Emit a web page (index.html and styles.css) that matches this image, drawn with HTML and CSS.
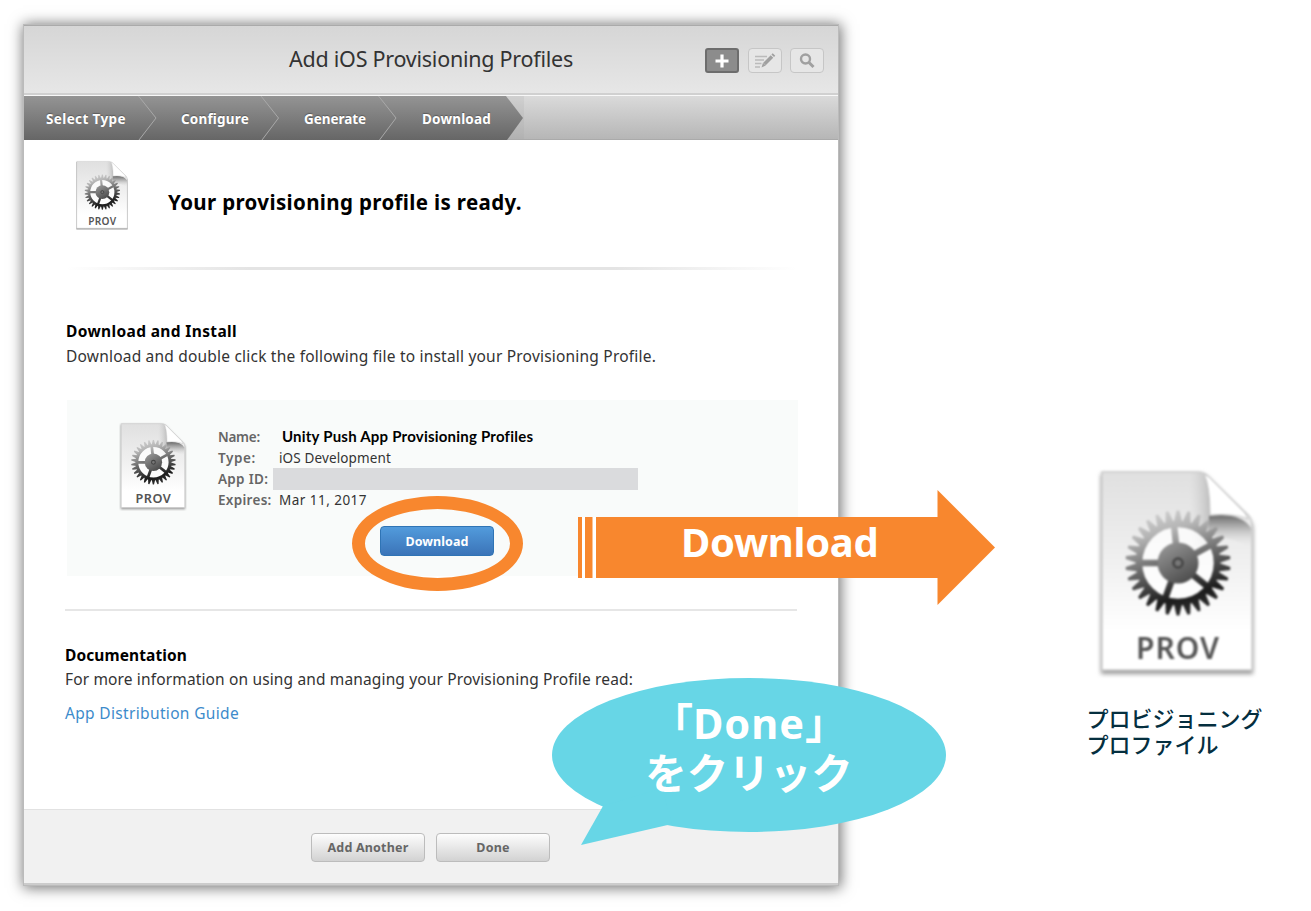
FILE: index.html
```html
<!DOCTYPE html>
<html lang="ja">
<head>
<meta charset="utf-8">
<title>Add iOS Provisioning Profiles</title>
<link rel="stylesheet" href="styles.css">
</head>
<body>
<svg class="defs" width="0" height="0" aria-hidden="true">
  <defs>
    <linearGradient id="paper" x1="0" y1="0" x2="0" y2="1"><stop offset="0" stop-color="#e0e0e0"/><stop offset=".45" stop-color="#f0f0f0"/><stop offset=".8" stop-color="#fff"/></linearGradient>
    <linearGradient id="metal" x1=".35" y1="0" x2=".65" y2="1"><stop offset="0" stop-color="#d0d0d0"/><stop offset=".2" stop-color="#b4b4b4"/><stop offset=".5" stop-color="#666"/><stop offset=".8" stop-color="#1c1c1c"/><stop offset="1" stop-color="#333"/></linearGradient>
    <linearGradient id="hub" x1=".2" y1="0" x2=".8" y2="1"><stop offset="0" stop-color="#979797"/><stop offset="1" stop-color="#484848"/></linearGradient>
    <linearGradient id="fold" x1="0" y1="1" x2="1" y2="0"><stop offset="0" stop-color="#fff"/><stop offset=".5" stop-color="#fff"/><stop offset="1" stop-color="#ccc"/></linearGradient>
    <linearGradient id="shade" x1="0" y1="0" x2="0" y2="1"><stop offset="0" stop-color="#6a6a6a"/><stop offset=".4" stop-color="#aaa" stop-opacity=".8"/><stop offset="1" stop-color="#eee" stop-opacity="0"/></linearGradient>
    <linearGradient id="shade2" x1="0" y1="0" x2="1" y2="0"><stop offset="0" stop-color="#ccc" stop-opacity="0"/><stop offset="1" stop-color="#aaa"/></linearGradient>
    <path id="tooth" d="M-4.4 -40L-1.4 -52.5H1.4L4.4 -40Z"/>
    <g id="teeth"><use href="#tooth"/><use href="#tooth" transform="rotate(12)"/><use href="#tooth" transform="rotate(24)"/><use href="#tooth" transform="rotate(36)"/><use href="#tooth" transform="rotate(48)"/></g>
    <mask id="gear" maskUnits="userSpaceOnUse" x="-54" y="-54" width="108" height="108">
      <g fill="#fff">
        <use href="#teeth"/><use href="#teeth" transform="rotate(60)"/><use href="#teeth" transform="rotate(120)"/><use href="#teeth" transform="rotate(180)"/><use href="#teeth" transform="rotate(240)"/><use href="#teeth" transform="rotate(300)"/>
        <circle r="39" fill="none" stroke="#fff" stroke-width="6.5"/>
        <path d="M0 0L-4 -38M0 0L33 -18M0 0L30 24M0 0L-13 36M0 0L-38 0" stroke="#fff" stroke-width="6.5"/>
      </g>
    </mask>
    <symbol id="prov" viewBox="-4 -4 160 210">
      <path d="M0 2H99Q103 2 107 6L148 48Q152 51 152 56V202H0Z" class="paper-shadow"/>
      <path d="M1 0H97Q102 0 107 4L148 44Q151 48 151 54V198H1Z" fill="url(#paper)" stroke="#ccc" stroke-width="1.500"/>
      <path d="M88 1H100Q109 5 109 45V75H88Z" fill="url(#shade2)" opacity=".65"/>
      <path d="M108 44Q140 40 150 56V76Q135 66 108 64Z" fill="url(#shade)"/>
      <path d="M103 2Q109 14 109 43Q133 41 147 47L144 41L108 5Z" fill="url(#fold)" stroke="#c4c4c4" stroke-width="1"/>
      <g transform="translate(77 91)">
        <circle r="37" fill="#fff" opacity=".75"/>
        <rect x="-54" y="-54" width="108" height="108" fill="url(#metal)" mask="url(#gear)"/>
        <circle r="20.5" fill="url(#hub)"/>
        <circle r="4.5" fill="#777" stroke="#444" stroke-width="2.5"/>
      </g>
      <text x="35" y="187" class="prov-text" textLength="83">PROV</text>
    </symbol>
  </defs>
</svg>

<main class="window">
  <header class="titlebar">
    <h1 class="title">Add iOS Provisioning Profiles</h1>
    <div class="tools">
      <button class="tool tool-active" aria-label="Add"><svg width="16" height="16" viewBox="0 0 16 16"><path d="M8 1.500V14.500M1.500 8H14.500" stroke="#fff" stroke-width="3.200"/></svg></button>
      <button class="tool" aria-label="Edit"><svg width="22" height="16" viewBox="0 0 22 16"><path d="M1 3.500H13M1 7H10M1 10.500H7.500M1 14H6" stroke="#bbb" stroke-width="1.400"/><path d="M10.500 11L18 3.500" stroke="#a0a0a0" stroke-width="3.600"/><path d="M18.700 2.800L20 1.500" stroke="#a0a0a0" stroke-width="3.600"/><path d="M9 9.700L11.800 12.500L7.500 14.500Z" fill="#a0a0a0"/></svg></button>
      <button class="tool" aria-label="Search"><svg width="16" height="16" viewBox="0 0 16 16"><circle cx="6.500" cy="6" r="4.500" fill="none" stroke="#a0a0a0" stroke-width="2.400"/><path d="M10 9.500L14.500 14" stroke="#a0a0a0" stroke-width="3"/></svg></button>
    </div>
  </header>
  <nav class="steps">
    <svg class="steps-shape" width="502" height="44" viewBox="0 0 502 44"><defs><linearGradient id="bar" x1="0" y1="0" x2="0" y2="1"><stop offset="0" stop-color="#949494"/><stop offset="1" stop-color="#666"/></linearGradient></defs><path d="M482 0L499 22L482 43H500V0Z" fill="#999" opacity=".15"/><path d="M0 0H482L499 22L483 44H0Z" fill="url(#bar)"/><path d="M114.500 0L132 22L115 44M237 0L254.500 22L238 44M354.500 0L372 22L355.500 44" fill="none" stroke="#a9a9a9"/></svg>
    <span class="step step-type">Select Type</span>
    <span class="step step-configure">Configure</span>
    <span class="step step-generate">Generate</span>
    <span class="step step-download">Download</span>
  </nav>
  <section class="ready">
    <svg class="doc-small" width="54" height="71"><use href="#prov"/></svg>
    <h2 class="ready-title">Your provisioning profile is ready.</h2>
  </section>
  <div class="rule-fade"></div>
  <section class="install">
    <h3 class="heading heading-install">Download and Install</h3>
    <p class="copy copy-install">Download and double click the following file to install your Provisioning Profile.</p>
  </section>
  <section class="panel">
    <svg class="doc-medium" width="68" height="89"><use href="#prov"/></svg>
    <dl class="facts">
      <dt class="label-name">Name:</dt><dd class="name">Unity Push App Provisioning Profiles</dd>
      <dt class="label-type">Type:</dt><dd class="type">iOS Development</dd>
      <dt>App ID:</dt><dd class="masked"></dd>
      <dt>Expires:</dt><dd class="expires">Mar 11, 2017</dd>
    </dl>
    <button class="download">Download</button>
    <span class="ring"></span>
  </section>
  <hr class="rule">
  <section class="docs">
    <h3 class="heading heading-docs">Documentation</h3>
    <p class="copy copy-docs">For more information on using and managing your Provisioning Profile read:</p>
    <a class="guide">App Distribution Guide</a>
  </section>
  <footer class="footer">
    <button class="btn">Add Another</button>
    <button class="btn">Done</button>
  </footer>
</main>

<figure class="result">
  <svg class="doc-large" width="160" height="210"><use href="#prov"/></svg>
  <figcaption>プロビジョニング<br>プロファイル</figcaption>
</figure>

<div class="arrow">
  <svg width="418" height="116" viewBox="0 0 418 116"><path d="M0 27H18V88H0Z" fill="#fff"/><path d="M0 27H4V88H0ZM7 27H14.500V88H7ZM18 27H359.500V0L417 57.500L359.500 115V88H18Z" fill="#f8872e"/></svg>
  <span class="arrow-text">Download</span>
</div>
<div class="bubble">
  <svg width="396" height="170" viewBox="0 0 396 170"><ellipse cx="197" cy="77" rx="197" ry="77" fill="#67d6e6"/><path d="M51 128L29 167L120 146L110 110Z" fill="#67d6e6"/></svg>
  <p class="bubble-text">「<span class="done">Done</span>」<br>をクリック</p>
</div>
</body>
</html>
```
FILE: styles.css
```css
* { box-sizing: border-box; }
body { margin: 0; width: 1311px; height: 911px; overflow: hidden; position: relative; display: flex; background: #fff; font-family: "Noto Sans", "Noto Sans CJK JP", sans-serif; color: #333; }
h1, h2, h3, p, dl, dd, figure { margin: 0; }
button { font-family: inherit; padding: 0; }
.defs { position: absolute; }

.window { flex: none; width: 814px; height: 860px; margin: 25px 0 0 24px; background: #fff; display: flex; flex-direction: column; box-shadow: 0 0 0 1px #bbb, 1px 1px 13px 2px rgba(0, 0, 0, .55); }
.titlebar { height: 71px; flex: none; display: flex; align-items: center; justify-content: center; position: relative; background: linear-gradient(#d6d6d6, #e7e7e7); border-top: 1px solid #aaa; border-bottom: 1px solid #f8f8f8; box-shadow: inset 0 -2px #d0d0d0; }
.title { font-size: 21.5px; font-weight: 400; line-height: 30px; letter-spacing: -.25px; margin-top: -3px; white-space: nowrap; }
.tools { position: absolute; right: 14px; top: 22px; display: flex; gap: 8.5px; }
.tool { width: 34px; height: 25px; border: 1px solid #c6c6c6; border-radius: 4px; background: #e6e6e6; display: flex; align-items: center; justify-content: center; }
.tool-active { background: #8c8c8c; border: 2px solid #6d6d6d; border-radius: 3px; }

.steps { height: 44px; flex: none; position: relative; background: linear-gradient(#dadada, #b6b6b6); border-bottom: 1px solid #aaa; display: grid; grid-template-columns: 135px 123px 118px 100px; padding: 2px 0 0 22px; align-items: center; }
.steps-shape { position: absolute; left: 0; top: 0; }
.step { position: relative; font-size: 13.5px; font-weight: 700; color: #fff; line-height: 20px; white-space: nowrap; text-shadow: 0 -1px 1px rgba(0, 0, 0, .3); }
.step-type { letter-spacing: .38px; }
.step-configure, .step-download { letter-spacing: .19px; }
.step-generate { letter-spacing: -.05px; }

.ready { height: 127px; flex: none; display: flex; padding: 20px 0 0 51px; gap: 39px; }
.ready-title { font-size: 20.5px; line-height: 30px; font-weight: 700; letter-spacing: .35px; color: #000; margin-top: 27px; white-space: nowrap; }
.rule-fade { height: 3px; flex: none; margin: 0 41px 0 42px; background: linear-gradient(90deg, #fff, #e4e4e4 25%, #e4e4e4 75%, #fff); }
.install { height: 130px; flex: none; padding: 49px 0 0 42px; }
.heading { font-size: 15.5px; line-height: 24px; font-weight: 700; color: #000; white-space: nowrap; }
.heading-install { letter-spacing: .36px; }
.heading-docs { letter-spacing: .1px; }
.copy { font-size: 15.5px; line-height: 25px; white-space: nowrap; }
.copy-install { margin-top: 1px; letter-spacing: .203px; }
.copy-docs { letter-spacing: .141px; }
.panel { height: 176px; flex: none; margin: 0 40px 0 43px; background: #f9fbfa; display: grid; grid-template-columns: 68px 1fr; column-gap: 31px; padding: 22px 0 0 52px; position: relative; align-content: start; }
.facts { display: grid; grid-template-columns: 61px 1fr; grid-auto-rows: 21.2px; font-size: 13.5px; line-height: 21px; margin-top: 4.5px; height: 99.5px; white-space: nowrap; }
.facts dt { font-weight: 600; color: #666; letter-spacing: .3px; }
.facts .label-name { letter-spacing: -.24px; }
.facts .label-type { letter-spacing: .6px; }
.facts .name { font-family: Lato, sans-serif; font-size: 15px; line-height: 19px; font-weight: 700; letter-spacing: .217px; color: #000; padding-left: 3px; }
.facts .type { letter-spacing: .13px; }
.facts .expires { letter-spacing: .47px; }
.facts .masked { background: #dadbdd; width: 365px; height: 22px; margin: -1px 0 0 -6px; }
.download { grid-column: 2; width: 114px; height: 30px; margin-left: 162px; border: 1px solid #2f74b5; border-radius: 4px; background: linear-gradient(#529bdc, #3b74b8); color: #fff; font-size: 12.5px; font-weight: 700; letter-spacing: .06px; }
.ring { position: absolute; left: 285px; top: 96px; width: 171px; height: 95px; border: 13px solid #f8872e; border-radius: 50%; }
.rule { flex: none; height: 2px; width: 732px; margin: 33px 0 0 41px; border: 0; background: #e6e6e6; }
.docs { flex: 1; padding: 32px 0 0 41px; }
.guide { display: block; margin-top: 9px; font-size: 15.5px; line-height: 24px; letter-spacing: .337px; color: #3d8bcb; white-space: nowrap; }
.footer { height: 76px; flex: none; background: #f1f1f1; border-top: 1px solid #e2e2e2; border-bottom: 2px solid #ccc; display: flex; gap: 11px; padding: 23px 0 0 287px; }
.btn { width: 114px; height: 29px; border: 1px solid #bcbcbc; border-radius: 4px; background: linear-gradient(#fdfdfd, #d2d2d2); color: #666; font-size: 12.5px; font-weight: 700; letter-spacing: .19px; }

.result { flex: none; margin: 468px 0 0 258.5px; }
.doc-large { display: block; filter: blur(.9px); }
.result figcaption { margin: 26px 0 0 -10px; font: 500 22px/26px "Noto Sans CJK JP", sans-serif; color: #052f3f; white-space: nowrap; }
.paper-shadow { fill: #999; filter: blur(2px); }
.prov-text { font-family: "Noto Sans", sans-serif; font-size: 30px; font-weight: 600; fill: #555; }
.arrow { position: absolute; left: 578px; top: 490px; }
.arrow-text { position: absolute; left: 103px; top: 24px; font-size: 40px; line-height: 56px; font-weight: 700; letter-spacing: -.3px; color: #fff; }
.bubble { position: absolute; left: 552px; top: 678px; }
.bubble-text { position: absolute; left: 0; top: 20px; width: 394px; text-align: center; font-size: 41.5px; line-height: 50px; font-weight: 700; color: #fff; white-space: nowrap; }
.done { letter-spacing: .98px; }
```
